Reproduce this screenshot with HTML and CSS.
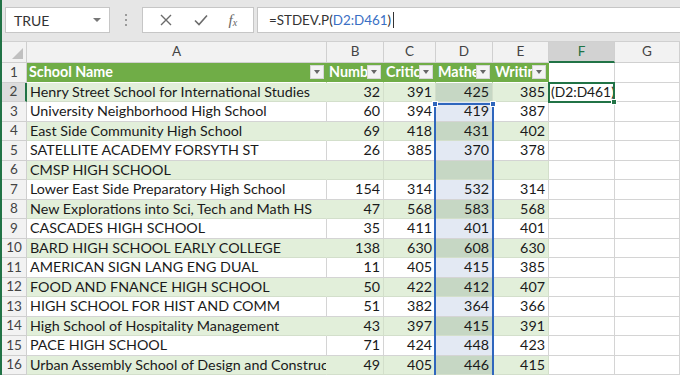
FILE: index.html
```html
<!DOCTYPE html>
<html>
<head>
<meta charset="utf-8">
<link rel="stylesheet" href="styles.css">
</head>
<body>
<div class="app">
  <div class="toolbar">
    <div class="namebox"><span>TRUE</span><span class="nb-arrow"></span></div>
    <div class="dots"><i></i><i></i><i></i></div>
    <div class="btns">
      <svg class="ic" width="14" height="14" viewBox="0 0 14 14"><path d="M2 2L12 12M12 2L2 12" stroke="#6b6b6b" stroke-width="1.4" fill="none"/></svg>
      <svg class="ic" width="16" height="14" viewBox="0 0 16 14"><path d="M2 7.5L6 11.5L14 2.5" stroke="#6b6b6b" stroke-width="1.6" fill="none"/></svg>
      <span class="fx">f<sub>x</sub></span>
    </div>
    <div class="formula">=STDEV.P(<span class="ref">D2:D461</span>)<span class="caret"></span></div>
  </div>
  <div class="sheet">
    <div class="row colhead">
      <div class="c rh corner"><span class="tri"></span></div>
      <div class="c ch">A</div><div class="c ch">B</div><div class="c ch">C</div><div class="c ch">D</div><div class="c ch">E</div><div class="c ch sel">F</div><div class="c ch">G</div>
    </div>
    <div class="row thead">
      <div class="c rh">1</div>
      <div class="c th"><span class="tt">School Name</span><span class="fb"></span></div>
      <div class="c th"><span class="tt">Number of Test Takers</span><span class="fb"></span></div>
      <div class="c th"><span class="tt">Critical Reading Mean</span><span class="fb"></span></div>
      <div class="c th"><span class="tt">Mathematics Mean</span><span class="fb"></span></div>
      <div class="c th"><span class="tt">Writing Mean</span><span class="fb"></span></div>
      <div class="c"></div><div class="c"></div>
    </div>
    <div class="row band">
      <div class="c rh rsel">2</div>
      <div class="c t">Henry Street School for International Studies</div>
      <div class="c n">32</div><div class="c n">391</div><div class="c n d">425</div><div class="c n">385</div>
      <div class="c plain edit">(D2:D461)</div><div class="c plain"></div>
    </div>
    <div class="row">
      <div class="c rh">3</div>
      <div class="c t">University Neighborhood High School</div>
      <div class="c n">60</div><div class="c n">394</div><div class="c n d">419</div><div class="c n">387</div>
      <div class="c plain"></div><div class="c plain"></div>
    </div>
    <div class="row band">
      <div class="c rh">4</div>
      <div class="c t">East Side Community High School</div>
      <div class="c n">69</div><div class="c n">418</div><div class="c n d">431</div><div class="c n">402</div>
      <div class="c plain"></div><div class="c plain"></div>
    </div>
    <div class="row">
      <div class="c rh">5</div>
      <div class="c t">SATELLITE ACADEMY FORSYTH ST</div>
      <div class="c n">26</div><div class="c n">385</div><div class="c n d">370</div><div class="c n">378</div>
      <div class="c plain"></div><div class="c plain"></div>
    </div>
    <div class="row band">
      <div class="c rh">6</div>
      <div class="c t">CMSP HIGH SCHOOL</div>
      <div class="c n"></div><div class="c n"></div><div class="c n d"></div><div class="c n"></div>
      <div class="c plain"></div><div class="c plain"></div>
    </div>
    <div class="row">
      <div class="c rh">7</div>
      <div class="c t">Lower East Side Preparatory High School</div>
      <div class="c n">154</div><div class="c n">314</div><div class="c n d">532</div><div class="c n">314</div>
      <div class="c plain"></div><div class="c plain"></div>
    </div>
    <div class="row band">
      <div class="c rh">8</div>
      <div class="c t">New Explorations into Sci, Tech and Math HS</div>
      <div class="c n">47</div><div class="c n">568</div><div class="c n d">583</div><div class="c n">568</div>
      <div class="c plain"></div><div class="c plain"></div>
    </div>
    <div class="row">
      <div class="c rh">9</div>
      <div class="c t">CASCADES HIGH SCHOOL</div>
      <div class="c n">35</div><div class="c n">411</div><div class="c n d">401</div><div class="c n">401</div>
      <div class="c plain"></div><div class="c plain"></div>
    </div>
    <div class="row band">
      <div class="c rh">10</div>
      <div class="c t">BARD HIGH SCHOOL EARLY COLLEGE</div>
      <div class="c n">138</div><div class="c n">630</div><div class="c n d">608</div><div class="c n">630</div>
      <div class="c plain"></div><div class="c plain"></div>
    </div>
    <div class="row">
      <div class="c rh">11</div>
      <div class="c t">AMERICAN SIGN LANG ENG DUAL</div>
      <div class="c n">11</div><div class="c n">405</div><div class="c n d">415</div><div class="c n">385</div>
      <div class="c plain"></div><div class="c plain"></div>
    </div>
    <div class="row band">
      <div class="c rh">12</div>
      <div class="c t">FOOD AND FNANCE HIGH SCHOOL</div>
      <div class="c n">50</div><div class="c n">422</div><div class="c n d">412</div><div class="c n">407</div>
      <div class="c plain"></div><div class="c plain"></div>
    </div>
    <div class="row">
      <div class="c rh">13</div>
      <div class="c t">HIGH SCHOOL FOR HIST AND COMM</div>
      <div class="c n">51</div><div class="c n">382</div><div class="c n d">364</div><div class="c n">366</div>
      <div class="c plain"></div><div class="c plain"></div>
    </div>
    <div class="row band">
      <div class="c rh">14</div>
      <div class="c t">High School of Hospitality Management</div>
      <div class="c n">43</div><div class="c n">397</div><div class="c n d">415</div><div class="c n">391</div>
      <div class="c plain"></div><div class="c plain"></div>
    </div>
    <div class="row">
      <div class="c rh">15</div>
      <div class="c t">PACE HIGH SCHOOL</div>
      <div class="c n">71</div><div class="c n">424</div><div class="c n d">448</div><div class="c n">423</div>
      <div class="c plain"></div><div class="c plain"></div>
    </div>
    <div class="row band">
      <div class="c rh">16</div>
      <div class="c t">Urban Assembly School of Design and Construction</div>
      <div class="c n">49</div><div class="c n">405</div><div class="c n d">446</div><div class="c n">415</div>
      <div class="c plain"></div><div class="c plain"></div>
    </div>
    <div class="rangesel"><span class="h hl"></span><span class="h hr"></span></div>
    <div class="activebox"><span class="fill"></span></div>
  </div>
</div>
</body>
</html>
```
FILE: styles.css
```css
* { box-sizing: border-box; }
html, body { margin: 0; padding: 0; }
body { width: 680px; height: 375px; overflow: hidden; background: #fff; font-family: "Lato", "Liberation Sans", sans-serif; }
.app { border-left: 2px solid #217346; height: 375px; overflow: hidden; }

.toolbar { height: 42px; background: #e6e6e6; display: flex; align-items: center; padding: 0 0 1px 3px; border-bottom: 1px solid #d0d0d0; }
.namebox { width: 105px; height: 26px; background: #fff; border: 1px solid #c6c6c6; display: flex; align-items: center; justify-content: space-between; padding: 0 8px 0 8px; font-size: 14px; color: #333; }
.nb-arrow { width: 0; height: 0; border-left: 4px solid transparent; border-right: 4px solid transparent; border-top: 4px solid #777; }
.dots { width: 32px; display: flex; flex-direction: column; align-items: center; gap: 3px; }
.dots i { width: 2px; height: 2px; background: #9a9a9a; display: block; }
.btns { width: 112px; height: 26px; background: #fff; border: 1px solid #c6c6c6; display: flex; align-items: center; justify-content: space-around; padding: 0 6px; }
.fx { font-family: "Liberation Serif", serif; font-style: italic; font-size: 15px; color: #666; }
.fx sub { font-size: 10px; vertical-align: -1px; }
.formula { flex: 1; height: 26px; margin-left: 3px; background: #fff; border: 1px solid #c6c6c6; border-right: none; display: flex; align-items: center; padding-left: 11px; font-size: 13.4px; color: #333; white-space: pre; }
.ref { color: #3a6fc4; }
.caret { width: 1px; height: 16px; background: #333; margin-left: 2px; }

.sheet { position: relative; }
.row { display: grid; grid-template-columns: 25px 300px 57px 52px 57px 56px 66px 65px; height: 19.5px; }
.colhead { height: 21px; }
.c { border-right: 1px solid #d4d4d4; border-bottom: 1px solid #d4d4d4; overflow: hidden; white-space: nowrap; font-size: 14.3px; color: #1a1a1a; display: flex; align-items: center; line-height: 1; }
.rh { background: #f2f2f2; color: #444; justify-content: center; border-color: #cfcfcf; font-size: 13.5px; }
.rsel { background: #dcdcdc; border-right: 2px solid #217346; color: #444; }
.corner { position: relative; justify-content: flex-end; align-items: flex-end; padding: 0 3px 3px 0; }
.tri { width: 0; height: 0; border-left: 11px solid transparent; border-bottom: 11px solid #c0c0c0; }
.ch { background: #f2f2f2; color: #444; justify-content: center; border-color: #d0d0d0; font-size: 13.5px; }
.ch.sel { background: #d2d2d2; border-bottom: 2px solid #217346; color: #217346; }
.th { background: #70ad47; color: #fff; font-weight: bold; padding-left: 2px; padding-right: 2px; border-right: 1px solid #70ad47; border-bottom: 1px solid #fff; }
.tt { flex: 1; overflow: hidden; }
.fb { width: 14px; height: 14px; background: #f3f3f3; border: 1px solid #d6d6d6; flex: none; display: flex; align-items: center; justify-content: center; }
.fb::after { content: ""; width: 0; height: 0; border-left: 3.5px solid transparent; border-right: 3.5px solid transparent; border-top: 4px solid #666; }
.t { padding-left: 3px; }
.n { justify-content: flex-end; padding-right: 3px; }
.band .t, .band .n { background: #e2efda; border-color: #e2efda; border-bottom-color: #d3dfcb; }
.band .n { border-right-color: #d3dfcb; }
.d { background: #e3e9f3; }
.band .d { background: #c6d7c4; }
.plain { background: #fff; }
.edit { padding-left: 2px; font-size: 13.8px; overflow: visible; }

.rangesel { position: absolute; left: 432px; top: 60.5px; width: 60px; height: 400px; border: 2px solid #2f66bd; }
.h { position: absolute; width: 6px; height: 6px; background: #2f66bd; border: 1px solid #fff; top: -4px; }
.hl { left: -4px; }
.hr { right: -4px; }
.activebox { position: absolute; left: 546px; top: 39.5px; width: 67px; height: 21px; border: 2px solid #217346; }
.fill { position: absolute; right: -4px; bottom: -4px; width: 6px; height: 6px; background: #217346; border: 1px solid #fff; }
```
